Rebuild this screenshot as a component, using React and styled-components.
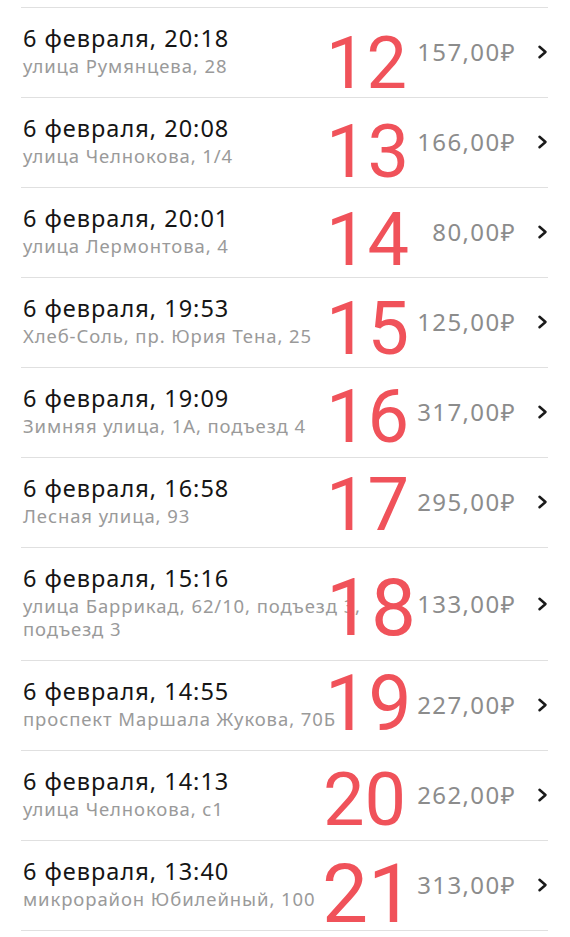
import React from "react";
import styled, { createGlobalStyle } from "styled-components";

const Global = createGlobalStyle`
  html, body { margin: 0; padding: 0; background: #ffffff; }
  body { font-family: "Noto Sans", "Open Sans", sans-serif; }
`;

const Page = styled.div`
  width: 570px;
  height: 937px;
  overflow: hidden;
  background: #fff;
  padding-top: 7px;
  box-sizing: border-box;
`;

const List = styled.div`
  margin: 0 22px 0 21px;
  border-bottom: 1px solid #e0e0e0;
`;

const Row = styled.div`
  position: relative;
  display: flex;
  align-items: center;
  border-top: 1px solid #e0e0e0;
  padding: 15px 0 20px 2px;
`;

const Info = styled.div`
  flex: 1;
  min-width: 0;
  display: flex;
  flex-direction: column;
`;

const Title = styled.div`
  font-size: 23.5px;
  line-height: 30px;
  letter-spacing: 1px;
  color: #151515;
`;

const Address = styled.div`
  margin-top: 1px;
  font-size: 18.5px;
  line-height: 23px;
  letter-spacing: 0.9px;
  color: #9a9a9a;
`;

const Price = styled.div`
  flex: none;
  width: 104px;
  text-align: right;
  font-size: 24px;
  line-height: 24px;
  letter-spacing: 1.4px;
  color: #8c8c8c;
  margin: 4px 21px 0 0;
`;

const Chevron = styled.svg`
  flex: none;
  width: 11px;
  height: 14px;
  margin-top: 4px;
`;

const Badge = styled.div`
  position: absolute;
  z-index: 1;
  font-family: Roboto, "Liberation Sans", sans-serif;
  font-weight: 400;
  line-height: 1;
  color: #f0525a;
  white-space: nowrap;
  pointer-events: none;
`;

const rows = [
  { t: "20:18", a: "улица Румянцева, 28", p: "157,00₽", n: 12, cap: 30, f: 72, x: 305 },
  { t: "20:08", a: "улица Челнокова, 1/4", p: "166,00₽", n: 13, cap: 28, f: 74, x: 305 },
  { t: "20:01", a: "улица Лермонтова, 4", p: "80,00₽", n: 14, cap: 26, f: 74, x: 305 },
  { t: "19:53", a: "Хлеб-Соль, пр. Юрия Тена, 25", p: "125,00₽", n: 15, cap: 25, f: 74, x: 305 },
  { t: "19:09", a: "Зимняя улица, 1А, подъезд 4", p: "317,00₽", n: 16, cap: 23, f: 74, x: 305 },
  { t: "16:58", a: "Лесная улица, 93", p: "295,00₽", n: 17, cap: 21, f: 74, x: 305 },
  { t: "15:16", a: "улица Баррикад, 62/10, подъезд 3, подъезд 3", p: "133,00₽", n: 18, cap: 31, f: 80, x: 305 },
  { t: "14:55", a: "проспект Маршала Жукова, 70Б", p: "227,00₽", n: 19, cap: 16, f: 77, x: 304 },
  { t: "14:13", a: "улица Челнокова, с1", p: "262,00₽", n: 20, cap: 23, f: 74, x: 302 },
  { t: "13:40", a: "микрорайон Юбилейный, 100", p: "313,00₽", n: 21, cap: 24, f: 82, x: 301 },
];

function Item({ r }) {
  const top = r.cap - 1 - Math.round(0.131 * r.f);
  return (
    <Row>
      <Info>
        <Title>6 февраля, {r.t}</Title>
        <Address>{r.a}</Address>
      </Info>
      <Price>{r.p}</Price>
      <Chevron viewBox="0 0 11 14">
        <polyline
          points="2.5,1.8 8.5,7 2.5,12.2"
          fill="none"
          stroke="#1a1a1a"
          strokeWidth="2.5"
          strokeLinecap="round"
          strokeLinejoin="round"
        />
      </Chevron>
      <Badge style={{ top, left: r.x, fontSize: r.f }}>{r.n}</Badge>
    </Row>
  );
}

export default function App() {
  return (
    <>
      <Global />
      <Page>
        <List>
          {rows.map((r) => (
            <Item key={r.n} r={r} />
          ))}
        </List>
      </Page>
    </>
  );
}
